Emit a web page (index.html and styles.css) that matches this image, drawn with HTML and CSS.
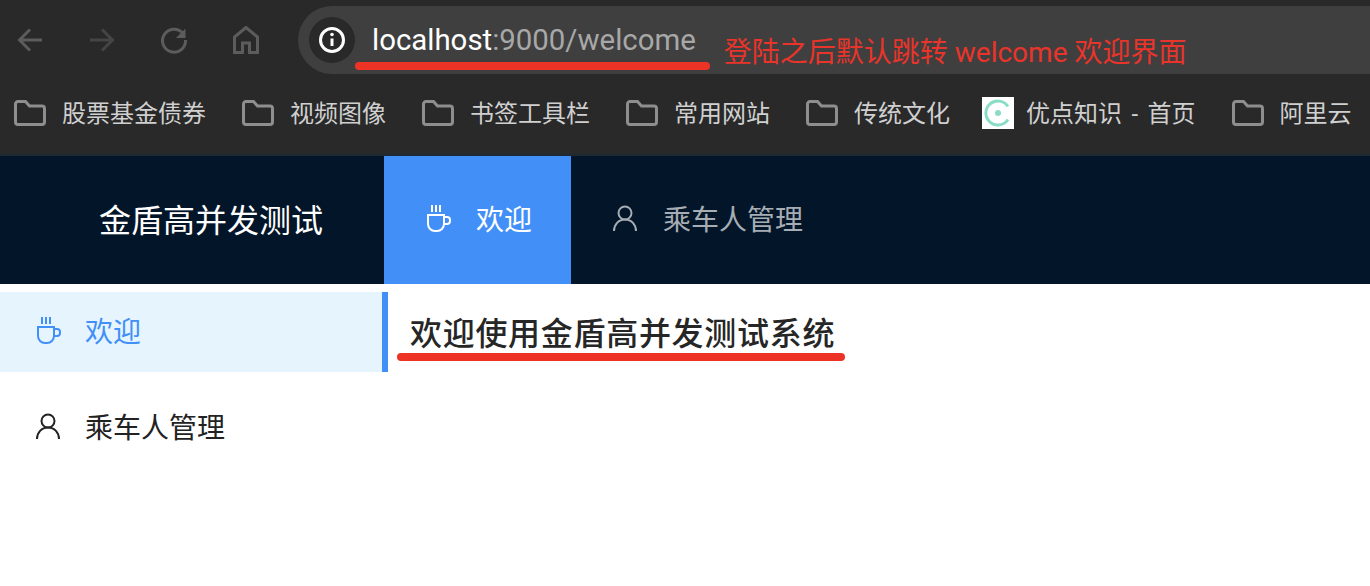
FILE: index.html
```html
<!DOCTYPE html>
<html lang="zh-CN">
<head>
  <meta charset="UTF-8" />
  <title>金盾高并发测试</title>
  <link rel="stylesheet" href="styles.css">
</head>
<body>
  <div class="browser">
    <div class="toolbar">
      <div class="tool-buttons">
        <svg class="tool-icon" viewBox="0 0 28 28"><path d="M26 14H4M14 3.500 3.500 14 14 24.500"/></svg>
        <svg class="tool-icon tool-off" viewBox="0 0 28 28"><path d="M2 14h22M14 3.500 24.500 14 14 24.500"/></svg>
        <svg class="tool-icon" viewBox="0 0 28 28"><path d="M23 7.500A11.500 11.500 0 1 0 25.500 14"/><path class="tool-fill" d="M25.500 2.500v9.500h-9.500z"/></svg>
        <svg class="tool-icon" viewBox="0 0 28 28"><path d="M14 1.500 2.500 11v15.500h8V17h7v9.500h8V11z"/></svg>
      </div>
      <div class="url-bar">
        <span class="site-info">
          <svg class="info-icon" viewBox="0 0 28 28">
            <circle cx="14" cy="14" r="11.500"/>
            <path d="M14 12.500v7.500"/>
            <circle class="info-dot" cx="14" cy="8.500" r="1.800"/>
          </svg>
        </span>
        <span class="url-text">localhost<span class="url-rest">:9000/welcome</span></span>
        <span class="note">登陆之后默认跳转 welcome 欢迎界面</span>
        <span class="mark url-mark"></span>
      </div>
    </div>
    <div class="bookmarks">
      <a class="bookmark"><svg class="folder" viewBox="0 0 32 26"><path d="M1.500 4A2.500 2.500 0 0 1 4 1.500h7.500l4 4.500H28A2.500 2.500 0 0 1 30.500 8.500V22a2.500 2.500 0 0 1-2.500 2.500H4A2.500 2.500 0 0 1 1.500 22z"/></svg>股票基金债券</a>
      <a class="bookmark"><svg class="folder" viewBox="0 0 32 26"><path d="M1.500 4A2.500 2.500 0 0 1 4 1.500h7.500l4 4.500H28A2.500 2.500 0 0 1 30.500 8.500V22a2.500 2.500 0 0 1-2.500 2.500H4A2.500 2.500 0 0 1 1.500 22z"/></svg>视频图像</a>
      <a class="bookmark"><svg class="folder" viewBox="0 0 32 26"><path d="M1.500 4A2.500 2.500 0 0 1 4 1.500h7.500l4 4.500H28A2.500 2.500 0 0 1 30.500 8.500V22a2.500 2.500 0 0 1-2.500 2.500H4A2.500 2.500 0 0 1 1.500 22z"/></svg>书签工具栏</a>
      <a class="bookmark"><svg class="folder" viewBox="0 0 32 26"><path d="M1.500 4A2.500 2.500 0 0 1 4 1.500h7.500l4 4.500H28A2.500 2.500 0 0 1 30.500 8.500V22a2.500 2.500 0 0 1-2.500 2.500H4A2.500 2.500 0 0 1 1.500 22z"/></svg>常用网站</a>
      <a class="bookmark"><svg class="folder" viewBox="0 0 32 26"><path d="M1.500 4A2.500 2.500 0 0 1 4 1.500h7.500l4 4.500H28A2.500 2.500 0 0 1 30.500 8.500V22a2.500 2.500 0 0 1-2.500 2.500H4A2.500 2.500 0 0 1 1.500 22z"/></svg>传统文化</a>
      <a class="bookmark bookmark-site"><svg class="favicon" viewBox="0 0 32 32"><rect width="32" height="32" fill="#fff"/><path class="favicon-ring" d="M26 9.500A12 12 0 1 0 26 22.500"/><circle cx="16" cy="16" r="3" fill="#8adcc6"/></svg>优点知识 - 首页</a>
      <a class="bookmark"><svg class="folder" viewBox="0 0 32 26"><path d="M1.500 4A2.500 2.500 0 0 1 4 1.500h7.500l4 4.500H28A2.500 2.500 0 0 1 30.500 8.500V22a2.500 2.500 0 0 1-2.500 2.500H4A2.500 2.500 0 0 1 1.500 22z"/></svg>阿里云</a>
    </div>
  </div>

  <header class="top-nav">
    <div class="logo">金盾高并发测试</div>
    <a class="nav-item nav-active">
      <svg class="menu-icon" viewBox="0 0 28 28"><path d="M4 11h16v9a7 7 0 0 1-7 7h-2a7 7 0 0 1-7-7zM20 13h3a3 3 0 0 1 3 3v1a3 3 0 0 1-3 3h-3M8 1v7M12 1v7M16 1v7"/></svg>
      欢迎
    </a>
    <a class="nav-item">
      <svg class="menu-icon" viewBox="0 0 28 28"><circle cx="14" cy="9" r="6.500"/><path d="M3 27c0-6.500 4.500-11.500 11-11.500S25 20.500 25 27"/></svg>
      乘车人管理
    </a>
  </header>

  <div class="main">
    <aside class="side-menu">
      <a class="side-item side-active">
        <svg class="menu-icon" viewBox="0 0 28 28"><path d="M4 11h16v9a7 7 0 0 1-7 7h-2a7 7 0 0 1-7-7zM20 13h3a3 3 0 0 1 3 3v1a3 3 0 0 1-3 3h-3M8 1v7M12 1v7M16 1v7"/></svg>
        欢迎
      </a>
      <a class="side-item">
        <svg class="menu-icon" viewBox="0 0 28 28"><circle cx="14" cy="9" r="6.500"/><path d="M3 27c0-6.500 4.500-11.500 11-11.500S25 20.500 25 27"/></svg>
        乘车人管理
      </a>
    </aside>
    <main class="content">
      <h1 class="title">欢迎使用金盾高并发测试系统<span class="mark title-mark"></span></h1>
    </main>
  </div>
</body>
</html>
```

FILE: styles.css
```css
* {
  margin: 0;
  padding: 0;
  box-sizing: border-box;
}

html, body {
  height: 100%;
  overflow: hidden;
  background: #fff;
  font-family: Roboto, "Noto Sans CJK SC", sans-serif;
}

a {
  text-decoration: none;
}

.browser {
  height: 156px;
  background: #292929;
  border-bottom: 2px solid #1d2a33;
}

.toolbar {
  display: flex;
  height: 74px;
  padding-top: 6px;
}

.tool-buttons {
  display: flex;
  width: 298px;
  padding: 20px 0 0 16px;
  gap: 44px;
}

.tool-icon {
  width: 28px;
  height: 28px;
  fill: none;
  stroke: #5c5c5c;
  stroke-width: 3;
}

.tool-off {
  stroke: #454545;
}

.tool-fill {
  fill: #5c5c5c;
  stroke: none;
}

.url-bar {
  position: relative;
  flex: 1;
  display: flex;
  align-items: center;
  padding-left: 11px;
  background: #3f3f3f;
  border-radius: 34px 0 0 34px;
}

.site-info {
  display: flex;
  align-items: center;
  justify-content: center;
  width: 46px;
  height: 46px;
  margin-right: 17px;
  background: #292929;
  border-radius: 50%;
}

.info-icon {
  width: 28px;
  height: 28px;
  fill: none;
  stroke: #fff;
  stroke-width: 3;
}

.info-dot {
  fill: #fff;
  stroke: none;
}

.url-text {
  font-size: 29.4px;
  color: #fff;
  white-space: nowrap;
}

.url-rest {
  color: #a8a8a8;
}

.note {
  align-self: flex-end;
  margin: 0 0 1px 28px;
  font-size: 28px;
  line-height: 40px;
  color: #e8342a;
  white-space: nowrap;
}

.mark {
  position: absolute;
  height: 8px;
  background: #ec3325;
  border-radius: 4px;
}

.url-mark {
  left: 57px;
  top: 56px;
  width: 355px;
}

.bookmarks {
  display: flex;
  align-items: center;
  height: 74px;
  padding-left: 14px;
  gap: 36px;
}

.bookmark {
  display: flex;
  align-items: center;
  gap: 16px;
  font-size: 24px;
  color: #d0d0d0;
  white-space: nowrap;
}

.bookmark-site {
  gap: 12px;
  margin-left: -4px;
  word-spacing: 3.500px;
}

.folder {
  width: 32px;
  height: 26px;
  margin-top: 4px;
  fill: none;
  stroke: #8e8e8e;
  stroke-width: 3;
}

.favicon {
  width: 32px;
  height: 32px;
  margin-top: 4px;
}

.favicon-ring {
  fill: none;
  stroke: #8adcc6;
  stroke-width: 3;
}

.top-nav {
  display: flex;
  height: 128px;
  background: #031528;
}

.logo {
  width: 384px;
  padding-left: 99px;
  font-size: 32px;
  line-height: 130px;
  color: #fff;
}

.nav-item {
  display: flex;
  align-items: center;
  gap: 24px;
  padding: 0 39px 4px 40px;
  font-size: 28px;
  color: #a6adb4;
}

.nav-active {
  background: #428ff8;
  color: #fff;
}

.menu-icon {
  width: 28px;
  height: 28px;
  fill: none;
  stroke: currentColor;
  stroke-width: 2;
}

.main {
  display: flex;
}

.side-menu {
  width: 388px;
  padding-top: 8px;
}

.side-item {
  display: flex;
  align-items: center;
  gap: 23px;
  height: 80px;
  margin-bottom: 16px;
  padding: 0 0 4px 34px;
  font-size: 28px;
  color: #222;
}

.side-active {
  background: #e6f4fe;
  border-right: 6px solid #428ff8;
  color: #428ff8;
}

.content {
  flex: 1;
  padding: 27px 0 0 22px;
}

.title {
  position: relative;
  display: inline-block;
  font-size: 32px;
  line-height: 46px;
  font-weight: 500;
  letter-spacing: 0.700px;
  color: #262626;
}

.title-mark {
  left: -13px;
  top: 42px;
  width: 448px;
}
```
